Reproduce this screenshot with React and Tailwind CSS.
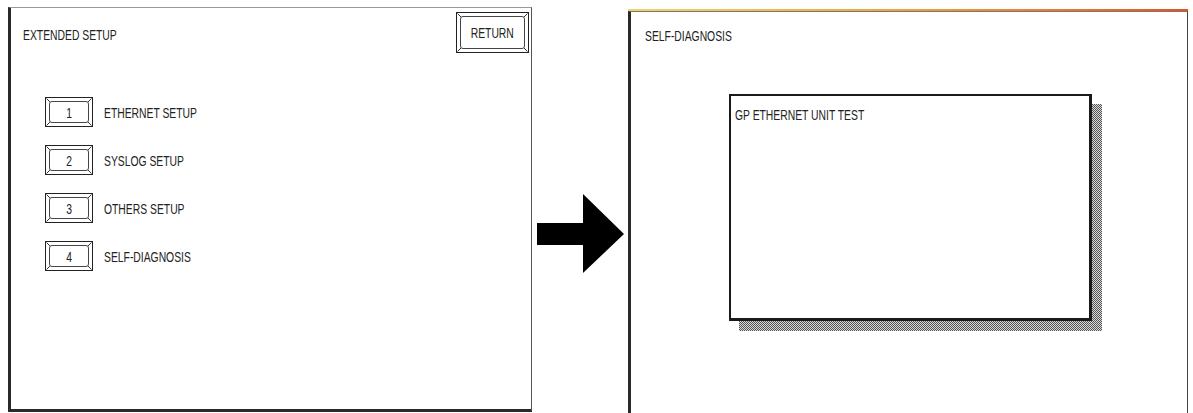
const font = { fontFamily: '"Liberation Sans", Arial, sans-serif' };

const Label = ({ children, center = false }) => (
  <span
    style={font}
    className={`inline-block whitespace-nowrap text-[15px] leading-[15px] text-[#222] scale-x-[0.69] ${
      center ? "origin-center" : "origin-left"
    }`}
  >
    {children}
  </span>
);

const Bevel = ({ w, h }) => (
  <svg className="absolute inset-0 pointer-events-none" width={w} height={h}>
    <line x1="0.5" y1="0.5" x2="4" y2="4" stroke="#333" strokeWidth="1" />
    <line x1={w - 0.5} y1="0.5" x2={w - 4} y2="4" stroke="#333" strokeWidth="1" />
    <line x1="0.5" y1={h - 0.5} x2="4" y2={h - 4} stroke="#333" strokeWidth="1" />
    <line x1={w - 0.5} y1={h - 0.5} x2={w - 4} y2={h - 4} stroke="#333" strokeWidth="1" />
  </svg>
);

const PanelButton = ({ label, w, h }) => (
  <div
    className="relative shrink-0 border border-[#222] p-[3px] bg-white"
    style={{ width: w, height: h }}
  >
    <Bevel w={w - 2} h={h - 2} />
    <div className="flex h-full w-full items-center justify-center rounded-[3px] border border-[#444]">
      <Label center>{label}</Label>
    </div>
  </div>
);

const menuItems = [
  { n: "1", label: "ETHERNET SETUP" },
  { n: "2", label: "SYSLOG SETUP" },
  { n: "3", label: "OTHERS SETUP" },
  { n: "4", label: "SELF-DIAGNOSIS" },
];

const ExtendedSetup = () => (
  <div className="ml-[8px] mt-[7px] h-[405px] w-[524px] shrink-0 border-t border-r border-t-[#999] border-r-[#555] border-l-[3px] border-b-[3px] border-l-[#2a2a2a] border-b-[#2a2a2a] bg-white">
    <div className="flex items-start justify-between pl-[12px] pr-[2px] pt-[4px]">
      <div className="mt-[10px]">
        <Label>EXTENDED SETUP</Label>
      </div>
      <PanelButton label="RETURN" w={73} h={41} />
    </div>
    <div className="mt-[44px] flex flex-col gap-[18px] pl-[34px]">
      {menuItems.map((item) => (
        <div key={item.n} className="flex items-center gap-[11px]">
          <PanelButton label={item.n} w={48} h={30} />
          <Label>{item.label}</Label>
        </div>
      ))}
    </div>
  </div>
);

const Arrow = () => (
  <div className="w-[96px] shrink-0 pl-[5px] pt-[194px]">
    <svg width="88" height="80" viewBox="0 0 88 80">
      <polygon points="0,29 46,29 46,0 87,40 46,79 46,51 0,51" fill="#000" />
    </svg>
  </div>
);

const SelfDiagnosis = () => (
  <div className="mt-[9px] flex w-[560px] shrink-0 flex-col">
    <div className="h-[2px] bg-gradient-to-r from-[#f3d36a] via-[#f0a040] to-[#e8501c]" />
    <div className="flex-1 border-t border-t-[#777] border-l-[3px] border-l-[#2a2a2a] border-r border-r-[#444] bg-white pl-[14px] pt-[11px]">
      <Label>SELF-DIAGNOSIS</Label>
      <div className="relative ml-[84px] mt-[47px] h-[227px] w-[363px]">
        <div className="absolute left-[10px] top-[10px] h-full w-full bg-[repeating-conic-gradient(#555_0_25%,#d8d8d8_0_50%)] bg-[length:2px_2px]" />
        <div className="relative h-full w-full border-t-2 border-l-2 border-r-[3px] border-b-[3px] border-[#1a1a1a] bg-white pl-[4px] pt-[6px]">
          <Label>GP ETHERNET UNIT TEST</Label>
        </div>
      </div>
    </div>
  </div>
);

export default function App() {
  return (
    <div className="flex h-[413px] w-[1193px] overflow-hidden bg-white">
      <ExtendedSetup />
      <Arrow />
      <SelfDiagnosis />
    </div>
  );
}
